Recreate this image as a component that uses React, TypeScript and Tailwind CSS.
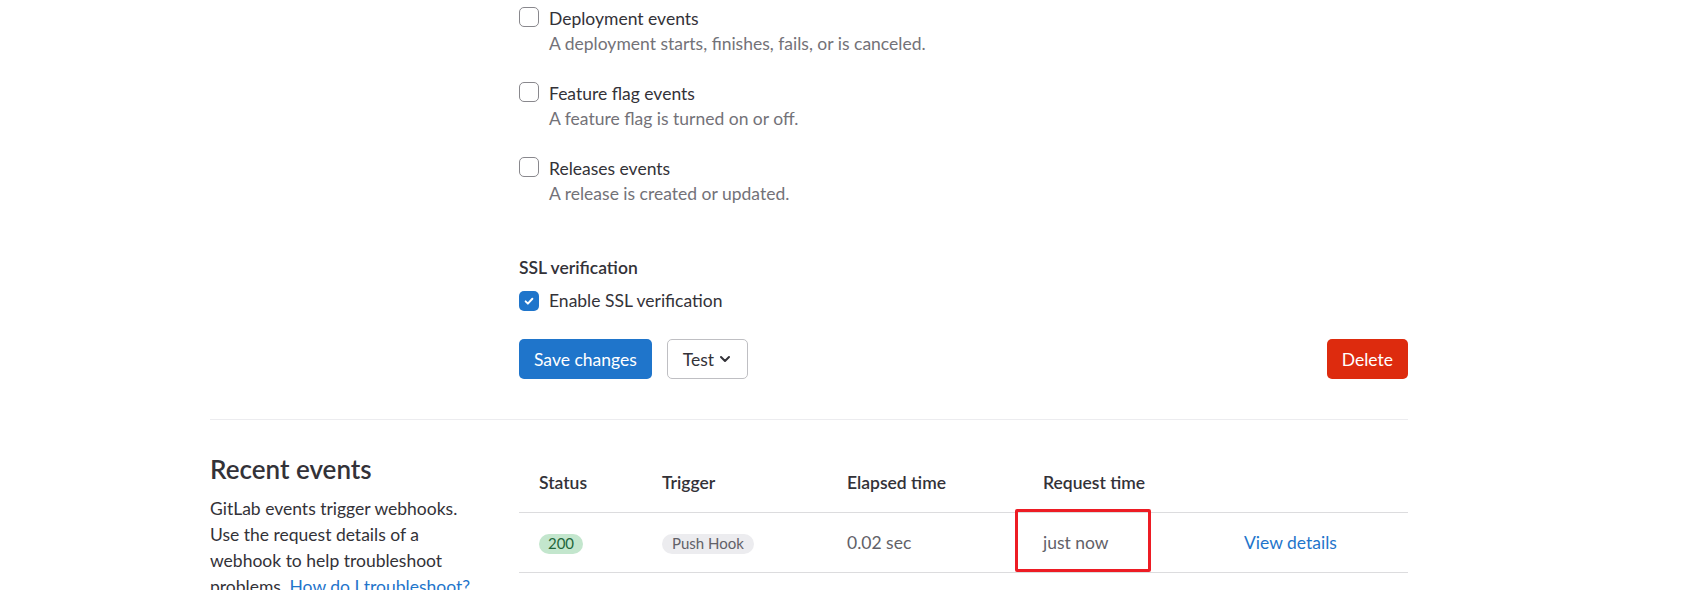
import { ChevronDown } from "lucide-react";

function EventCheckbox({ label, help }: { label: string; help: string }) {
  return (
    <div className="mb-[25px] flex">
      <span className="mt-[1px] h-[20px] w-[20px] shrink-0 rounded-[5px] border border-[#89888d] bg-white" />
      <div className="ml-[10px]">
        <p className="text-[#333238]">{label}</p>
        <p className="text-[#737278]">{help}</p>
      </div>
    </div>
  );
}

function CheckedBox() {
  return (
    <span className="flex h-[20px] w-[20px] shrink-0 items-center justify-center rounded-[5px] bg-[#1f75cb]">
      <svg width="12" height="12" viewBox="0 0 16 16" fill="none">
        <path
          d="M3.5 8.5l3 3 6-6.5"
          stroke="white"
          strokeWidth="2.6"
          strokeLinecap="round"
          strokeLinejoin="round"
        />
      </svg>
    </span>
  );
}

const events = [
  {
    label: "Deployment events",
    help: "A deployment starts, finishes, fails, or is canceled.",
  },
  { label: "Feature flag events", help: "A feature flag is turned on or off." },
  { label: "Releases events", help: "A release is created or updated." },
];

export default function App() {
  return (
    <div
      className="h-[590px] overflow-hidden bg-white text-[17.5px] leading-[25px] text-[#333238]"
      style={{ fontFamily: "Lato, 'Liberation Sans', sans-serif" }}
    >
      <div className="ml-[210px] w-[1198px]">
        <div className="pl-[309px] pt-[6px]">
          {events.map((e) => (
            <EventCheckbox key={e.label} label={e.label} help={e.help} />
          ))}

          <div className="pt-[24px]">
            <p className="font-semibold">SSL verification</p>
            <label className="mt-[8px] flex items-center">
              <CheckedBox />
              <span className="ml-[10px]">Enable SSL verification</span>
            </label>
          </div>

          <div className="mt-[26px] flex items-center">
            <button
              type="button"
              className="h-[40px] rounded-[5px] bg-[#1f75cb] px-[15px] text-white"
            >
              Save changes
            </button>
            <button
              type="button"
              className="ml-[15px] flex h-[40px] items-center rounded-[5px] border border-[#bfbfc3] bg-white pl-[15px] pr-[14px] text-[#333238]"
            >
              Test
              <ChevronDown size={16} strokeWidth={3} className="ml-[3px]" />
            </button>
            <button
              type="button"
              className="ml-auto h-[40px] rounded-[5px] bg-[#dd2b0e] px-[15px] text-white"
            >
              Delete
            </button>
          </div>
        </div>

        <div className="mt-[40px] border-t border-[#ececef]" />

        <div className="flex items-start pt-[34px]">
          <div className="w-[309px] shrink-0 pr-[40px]">
            <h4 className="text-[26px] font-semibold leading-[30px]">
              Recent events
            </h4>
            <p className="mt-[12px] w-[265px] leading-[26px] text-[#333238]">
              GitLab events trigger webhooks. Use the request details of a
              webhook to help troubleshoot problems.{" "}
              <a className="text-[#1f75cb]">How do I troubleshoot?</a>
            </p>
          </div>

          <table className="w-[889px] border-collapse text-left">
            <thead>
              <tr className="border-b border-[#dcdcde]">
                <th className="w-[123px] pb-[17px] pl-[20px] pt-[16px] font-semibold">
                  Status
                </th>
                <th className="w-[185px] pb-[17px] pl-[20px] pt-[16px] font-semibold">
                  Trigger
                </th>
                <th className="w-[196px] pb-[17px] pl-[20px] pt-[16px] font-semibold">
                  Elapsed time
                </th>
                <th className="w-[201px] pb-[17px] pl-[20px] pt-[16px] font-semibold">
                  Request time
                </th>
                <th className="w-[184px] pb-[17px] pl-[20px] pt-[16px]" />
              </tr>
            </thead>
            <tbody>
              <tr className="border-b border-[#dcdcde]">
                <td className="h-[60px] pl-[20px]">
                  <span className="inline-flex h-[20px] w-[44px] items-center justify-center rounded-full bg-[#c3e6cd] text-[15px] text-[#24663b]">
                    200
                  </span>
                </td>
                <td className="h-[60px] pl-[20px]">
                  <span className="inline-flex h-[20px] w-[92px] items-center justify-center rounded-full bg-[#ececef] text-[15px] text-[#626168]">
                    Push Hook
                  </span>
                </td>
                <td className="h-[60px] pl-[20px] text-[#626168]">0.02 sec</td>
                <td className="relative h-[60px] pl-[20px] text-[#626168]">
                  just now
                  <span className="absolute left-[-8px] top-[-4px] h-[63px] w-[136px] rounded-[2px] border-[3px] border-[#ed1c24]" />
                </td>
                <td className="h-[60px] pl-[20px]">
                  <a className="text-[#1f75cb]">View details</a>
                </td>
              </tr>
            </tbody>
          </table>
        </div>
      </div>
    </div>
  );
}
